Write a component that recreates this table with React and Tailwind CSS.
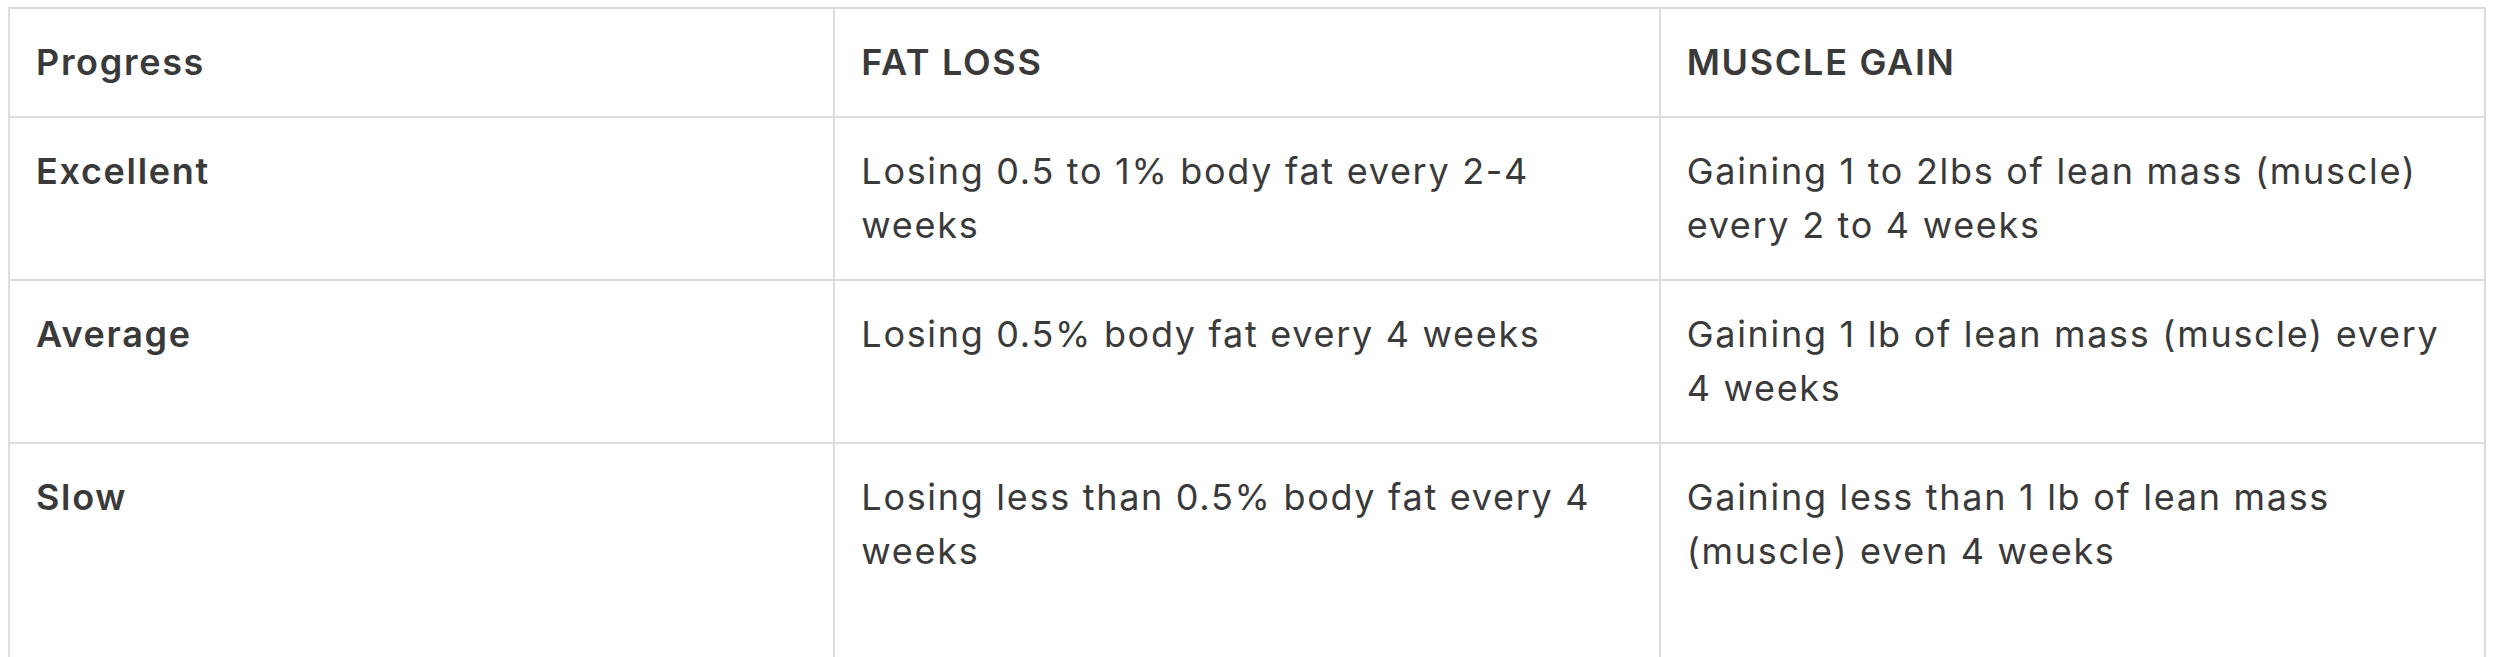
import React from 'react';

const rows = [
  {
    label: 'Excellent',
    fat: 'Losing 0.5 to 1% body fat every 2-4 weeks',
    muscle: 'Gaining 1 to 2lbs of lean mass (muscle) every 2 to 4 weeks',
  },
  {
    label: 'Average',
    fat: 'Losing 0.5% body fat every 4 weeks',
    muscle: 'Gaining 1 lb of lean mass (muscle) every 4 weeks',
  },
  {
    label: 'Slow',
    fat: 'Losing less than 0.5% body fat every 4 weeks',
    muscle: 'Gaining less than 1 lb of lean mass (muscle) even 4 weeks',
    tall: true,
  },
];

const cell = 'border-2 border-[#dddddd] align-top pl-[26px] pr-[26px] pt-[26px] pb-[27px]';

function ProgressTable() {
  return (
    <table className="w-[2478px] table-fixed border-collapse text-[36px] leading-[54px] tracking-[1.7px] text-[#3a3a3a] font-['Inter','Noto_Sans',sans-serif]">
      <thead>
        <tr>
          <th className={`${cell} w-1/3 text-left font-semibold`}>Progress</th>
          <th className={`${cell} w-1/3 text-left font-semibold`}>FAT LOSS</th>
          <th className={`${cell} w-1/3 text-left font-semibold`}>MUSCLE GAIN</th>
        </tr>
      </thead>
      <tbody>
        {rows.map((r) => (
          <tr key={r.label} className={r.tall ? 'h-[260px]' : ''}>
            <td className={`${cell} font-semibold`}>{r.label}</td>
            <td className={cell}>{r.fat}</td>
            <td className={cell}>{r.muscle}</td>
          </tr>
        ))}
      </tbody>
    </table>
  );
}

export default function App() {
  return (
    <div className="min-h-screen bg-white pl-[8px] pt-[7px]">
      <ProgressTable />
    </div>
  );
}
